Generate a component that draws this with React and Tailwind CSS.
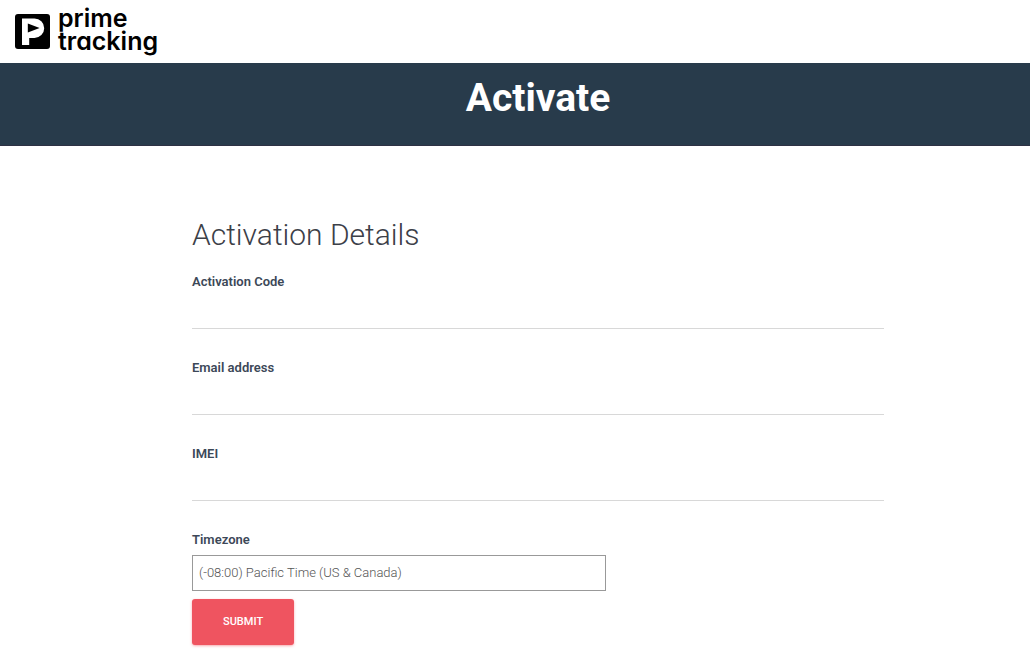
import { useState } from 'react';

const FIELDS = [
  { id: 'code', label: 'Activation Code', type: 'text' },
  { id: 'email', label: 'Email address', type: 'email' },
  { id: 'imei', label: 'IMEI', type: 'text' },
];

const TIMEZONES = [
  '(-08:00) Pacific Time (US & Canada)',
  '(-07:00) Mountain Time (US & Canada)',
  '(-06:00) Central Time (US & Canada)',
  '(-05:00) Eastern Time (US & Canada)',
];

function Logo() {
  return (
    <a href="#" className="flex items-center gap-2 text-black">
      <svg width="35" height="35" viewBox="0 0 35 35" aria-hidden="true">
        <rect width="35" height="35" rx="3" fill="#000" />
        <path
          d="M7 4.5h12.5a9.7 9.7 0 0 1 0 19.4H14.2V31H7z"
          fill="#fff"
        />
        <path d="M12.8 9.5L24.6 14 12.8 18.5z" fill="#000" />
      </svg>
      <span className="flex flex-col pb-1 font-[Inter,sans-serif] text-[25px] leading-[23px] font-semibold [font-feature-settings:'cv11']">
        <span>prime</span>
        <span>tracking</span>
      </span>
    </a>
  );
}

function Field({ id, label, type, value, onChange }) {
  return (
    <div className="mb-7">
      <label htmlFor={id} className="block text-[13px] leading-[22px] font-semibold">
        {label}
      </label>
      <input
        id={id}
        type={type}
        value={value}
        onChange={(e) => onChange(id, e.target.value)}
        className="block h-9 w-full border-b border-[#d8d8d8] bg-transparent text-[13px] font-light outline-none focus:border-[#ef5460]"
      />
    </div>
  );
}

export default function App() {
  const [values, setValues] = useState({ code: '', email: '', imei: '' });
  const [timezone, setTimezone] = useState(TIMEZONES[0]);

  const handleChange = (id, value) => {
    setValues((prev) => ({ ...prev, [id]: value }));
  };

  return (
    <div className="bg-white font-[Roboto,sans-serif] text-[#3c4858]">
      <header className="flex h-[63px] items-center px-[15px]">
        <Logo />
      </header>

      {/* Title banner */}
      <div className="h-[83px] border-b border-[#2e3144] bg-[#283b4b] pt-[11px] pl-[46px]">
        <h1 className="text-center text-[39px] leading-12 font-bold text-white">Activate</h1>
      </div>

      <main className="pt-[69px] pl-[46px]">
        <form className="mx-auto max-w-[692px]" onSubmit={(e) => e.preventDefault()}>
          <h2 className="mb-4 text-[30px] leading-10 font-light text-[#3c4048]">
            Activation Details
          </h2>

          {FIELDS.map((field) => (
            <Field
              key={field.id}
              {...field}
              value={values[field.id]}
              onChange={handleChange}
            />
          ))}

          <label htmlFor="timezone" className="mb-1 block text-[13px] leading-[22px] font-semibold">
            Timezone
          </label>
          <select
            id="timezone"
            value={timezone}
            onChange={(e) => setTimezone(e.target.value)}
            className="mb-2 block h-9 w-[414px] max-w-full appearance-none border border-[#999] bg-white px-1.5 text-[13px] font-light text-[#555]"
          >
            {TIMEZONES.map((tz) => (
              <option key={tz}>{tz}</option>
            ))}
          </select>

          <button
            type="submit"
            className="mb-3 h-[46px] rounded-[3px] bg-[#ef5460] px-[31px] text-[11px] font-medium text-white uppercase shadow-sm shadow-[#ef5460]/40"
          >
            Submit
          </button>
        </form>
      </main>
    </div>
  );
}
